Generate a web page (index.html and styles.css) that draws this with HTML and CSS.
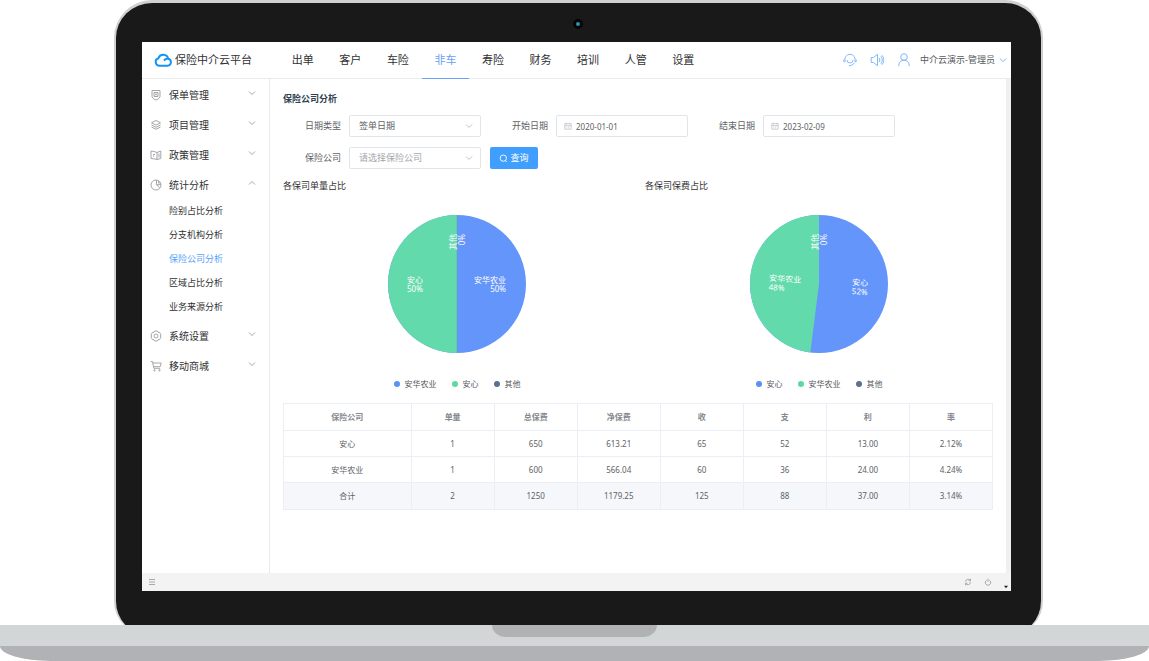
FILE: index.html
```html
<!DOCTYPE html>
<html lang="zh-CN">
<head>
<meta charset="utf-8">
<title>保险中介云平台</title>
<link rel="stylesheet" href="styles.css">
</head>
<body>
<svg class="defs" aria-hidden="true">
  <symbol id="down" viewBox="0 0 8 8"><path d="M1 2.5l3 3 3-3"/></symbol>
  <symbol id="up" viewBox="0 0 8 8"><path d="M1 5.5l3-3 3 3"/></symbol>
  <symbol id="calendar" viewBox="0 0 10 10"><path d="M1 2h8v7H1zM1 4.3h8M3 .8v2M7 .8v2M3 6h1M5 6h1M7 6h.8M3 7.5h1M5 7.5h1"/></symbol>
</svg>
<div class="lid">
  <span class="camera"></span>
  <div class="screen">
    <header class="topbar">
      <a class="brand" href="#">
        <svg class="brand-icon" viewBox="0 0 18 14"><path d="M5 12.7h8.6a3.5 3.5 0 0 0 .6-6.9A5.1 5.1 0 0 0 4.4 5.3 3.8 3.8 0 0 0 5 12.7zM10 7.6a4.2 4.2 0 0 1 4.2-1.8"/></svg>
        <span>保险中介云平台</span>
      </a>
      <nav class="nav">
        <a href="#">出单</a><a href="#">客户</a><a href="#">车险</a><a href="#" class="active">非车</a><a href="#">寿险</a><a href="#">财务</a><a href="#">培训</a><a href="#">人管</a><a href="#">设置</a>
      </nav>
      <div class="tools">
        <button type="button" aria-label="客服"><svg viewBox="0 0 14 14"><path d="M2.200 8.500A5.200 5.200 0 1 1 11.800 8.500M.8 6.500v2.200h1.400M13.200 6.500v2.200h-1.400M4 7a3 3 0 0 0 6 0M11.500 9.700a5.500 5.500 0 0 1-3.300 2.600M5.800 12.600h2.400"/></svg></button>
        <button type="button" aria-label="消息"><svg viewBox="0 0 14 14"><path d="M1.200 4.500h2.300L7.500 1.200v11.600l-4-3.300H1.200zM9.200 5a3.300 3.300 0 0 1 0 4M10.800 3.200a5.600 5.600 0 0 1 0 7.600M12 2.200a7 7 0 0 1 0 9.600"/></svg></button>
        <button type="button" class="user"><svg viewBox="0 0 14 14"><circle cx="7" cy="4" r="3.300"/><path d="M1.800 13.200V12a5.200 4.800 0 0 1 10.400 0V13.200"/></svg><span>中介云演示-管理员</span><svg class="chev" viewBox="0 0 8 8"><path d="M.8 2.500L4 5.600l3.200-3.100"/></svg></button>
      </div>
    </header>
    <div class="body">
      <aside class="sidebar">
        <button type="button" class="menu"><svg viewBox="0 0 12 12"><path d="M2 1.500h8v6.200L8.500 9.800 6 11 3.500 9.800 2 7.700zM4 3.500h4v4H4zM5 4.500l2 2M7 4.500l-2 2"/></svg><span>保单管理</span><svg class="chev"><use href="#down"/></svg></button>
        <button type="button" class="menu"><svg viewBox="0 0 12 12"><path d="M6 1.500l4.500 2.300L6 6.100 1.500 3.800zM1.500 6L6 8.300 10.500 6M1.500 8L6 10.300 10.500 8"/></svg><span>项目管理</span><svg class="chev"><use href="#down"/></svg></button>
        <button type="button" class="menu"><svg viewBox="0 0 12 12"><path d="M1 2l3 .5 3 1 3.800-1.500v7.500L7 10.500 4 9.800 1 9.500zM7 3.500v7M3 5.500h2M3 7h1M9 4.500v4"/></svg><span>政策管理</span><svg class="chev"><use href="#down"/></svg></button>
        <button type="button" class="menu"><svg viewBox="0 0 12 12"><circle cx="6" cy="6" r="5"/><path d="M6.500 1v4.700H11M6.500 5.700l3 3M8.500 2v2h2"/></svg><span>统计分析</span><svg class="chev"><use href="#up"/></svg></button>
        <div class="submenu">
          <a href="#">险别占比分析</a>
          <a href="#">分支机构分析</a>
          <a href="#" class="active">保险公司分析</a>
          <a href="#">区域占比分析</a>
          <a href="#">业务来源分析</a>
        </div>
        <button type="button" class="menu"><svg viewBox="0 0 12 12"><path d="M4.700 1h2.600l.8 1.300 1.500.1 1.300 2.200L10.300 6l.6 1.400-1.300 2.200-1.500.1L7.300 11H4.700l-.8-1.300-1.500-.1L1.100 7.400 1.700 6l-.6-1.400 1.300-2.200 1.500-.1z"/><circle cx="6" cy="6" r="2"/></svg><span>系统设置</span><svg class="chev"><use href="#down"/></svg></button>
        <button type="button" class="menu"><svg viewBox="0 0 12 12"><path d="M.5 1.500h2l1.300 6.800h6.400M2.800 3h8.400l-1 3.700H3.500"/><circle cx="4.500" cy="10.300" r=".7"/><circle cx="9.500" cy="10.300" r=".7"/></svg><span>移动商城</span><svg class="chev"><use href="#down"/></svg></button>
      </aside>
      <main class="main">
        <h1>保险公司分析</h1>
        <form class="filters">
          <div class="field"><label for="type">日期类型</label><div class="control"><select id="type"><option>签单日期</option></select><svg class="chev"><use href="#down"/></svg></div></div>
          <div class="field"><label for="start">开始日期</label><div class="control"><svg class="cal"><use href="#calendar"/></svg><input id="start" type="text" value="2020-01-01"></div></div>
          <div class="field"><label for="end">结束日期</label><div class="control"><svg class="cal"><use href="#calendar"/></svg><input id="end" type="text" value="2023-02-09"></div></div>
          <div class="field"><label for="company">保险公司</label><div class="control"><select id="company" class="empty"><option>请选择保险公司</option></select><svg class="chev"><use href="#down"/></svg></div></div>
          <button type="button" class="search"><svg viewBox="0 0 10 10"><circle cx="4.800" cy="4.600" r="3.500"/><path d="M7 7.300l1.700 1.700"/></svg>查询</button>
        </form>
        <div class="charts">
          <section>
            <h2>各保司单量占比</h2>
            <svg class="pie" viewBox="0 0 140 140">
              <circle cx="70" cy="70" r="69" fill="#6395fa"/>
              <path d="M70 70V139A69 69 0 0 1 70 1z" fill="#63daab"/>
              <path d="M70 1v138" stroke="#62a3a9" stroke-width=".5"/>
              <text x="20" y="69">安心</text><text x="20" y="78">50%</text>
              <text x="119" y="69" text-anchor="end">安华农业</text><text x="119" y="78" text-anchor="end">50%</text>
              <g transform="rotate(-90 70 20)"><text x="70" y="19" text-anchor="end">其他</text><text x="70" y="28" text-anchor="end">0%</text></g>
            </svg>
            <ul class="legend"><li class="blue">安华农业</li><li class="green">安心</li><li class="navy">其他</li></ul>
          </section>
          <section>
            <h2>各保司保费占比</h2>
            <svg class="pie" viewBox="0 0 140 140">
              <circle cx="70" cy="70" r="69" fill="#6395fa"/>
              <path d="M70 70L61.350 138.460A69 69 0 0 1 70 1z" fill="#63daab"/>
              <g transform="rotate(3.600 70 70)"><text x="20" y="70">安华农业</text><text x="20" y="79">48%</text><text x="119" y="69" text-anchor="end">安心</text><text x="119" y="78" text-anchor="end">52%</text></g>
              <g transform="rotate(-90 70 20)"><text x="70" y="19" text-anchor="end">其他</text><text x="70" y="28" text-anchor="end">0%</text></g>
            </svg>
            <ul class="legend"><li class="blue">安心</li><li class="green">安华农业</li><li class="navy">其他</li></ul>
          </section>
        </div>
        <table>
          <thead><tr><th class="name">保险公司</th><th>单量</th><th>总保费</th><th>净保费</th><th>收</th><th>支</th><th>利</th><th>率</th></tr></thead>
          <tbody>
            <tr><td>安心</td><td>1</td><td>650</td><td>613.21</td><td>65</td><td>52</td><td>13.00</td><td>2.12%</td></tr>
            <tr><td>安华农业</td><td>1</td><td>600</td><td>566.04</td><td>60</td><td>36</td><td>24.00</td><td>4.24%</td></tr>
          </tbody>
          <tfoot><tr><td>合计</td><td>2</td><td>1250</td><td>1179.25</td><td>125</td><td>88</td><td>37.00</td><td>3.14%</td></tr></tfoot>
        </table>
      </main>
      <div class="track"></div>
    </div>
    <footer class="status">
      <button type="button" aria-label="菜单"><svg viewBox="0 0 8 8"><path d="M1 1.500h6M1 4h6M1 6.500h6"/></svg></button>
      <span class="spacer"></span>
      <button type="button" aria-label="刷新"><svg viewBox="0 0 8 8"><path d="M1.500 3.700A2.600 2.600 0 0 1 6.300 2.500M6.500 .8v2h-2M6.500 4.300A2.600 2.600 0 0 1 1.700 5.500M1.500 7.200v-2h2"/></svg></button>
      <button type="button" aria-label="退出"><svg viewBox="0 0 8 8"><path d="M2.600 2.200a2.700 2.700 0 1 0 2.800 0M4 .8v3"/></svg></button>
      <svg class="tip" viewBox="0 0 6 6"><path d="M0 1h6L3 5z"/></svg>
    </footer>
  </div>
</div>
<div class="base"><span class="notch"></span></div>
</body>
</html>
```
FILE: styles.css
```css
* { box-sizing: border-box; }
body {
  margin: 0;
  min-height: 100vh;
  display: flex;
  flex-direction: column;
  background: #fff;
  color: #303133;
  font: 9px/12px "Noto Sans", "Noto Sans CJK SC", sans-serif;
}
a { color: inherit; text-decoration: none; }
button { padding: 0; border: 0; background: none; color: inherit; font: inherit; cursor: pointer; }
svg { display: block; fill: none; stroke: currentColor; }
h1, h2, ul { margin: 0; padding: 0; }
.defs { position: absolute; width: 0; height: 0; }

/* Laptop */
.lid {
  position: relative;
  flex: 1;
  display: flex;
  margin: 0 106px -10px 114px;
  padding: 39px 30px 44px 26px;
  border: 2px solid #cfd0d2;
  border-top-width: 3px;
  border-bottom-width: 0;
  border-radius: 38px 38px 34px 34px;
  background: #191919;
}
.camera {
  position: absolute;
  top: 16px;
  left: calc(50% - 6px);
  width: 10px;
  height: 10px;
  border: 3px solid #050505;
  border-radius: 50%;
  background: #2f8fb0;
}
.base {
  position: relative;
  height: 36px;
  border-radius: 0 0 50px 50px / 0 0 15px 15px;
  background: linear-gradient(#d2d6d7 21px, #b1b2b5 21px);
}
.notch {
  position: absolute;
  top: 0;
  left: calc(50% - 83px);
  width: 165px;
  height: 12px;
  border-radius: 0 0 14px 14px / 0 0 12px 12px;
  background: #b1b2b4;
}
.screen { flex: 1; min-width: 0; display: flex; flex-direction: column; background: #fff; }

/* Header */
.topbar {
  display: flex;
  height: 37px;
  padding: 0 4px 0 12px;
  border-bottom: 1px solid #e8eaec;
}
.brand { width: 125px; display: flex; align-items: center; gap: 3px; font-size: 11px; }
.brand-icon { width: 18px; height: 14px; color: #1495f5; stroke-width: 2; }
.nav { width: 428px; display: grid; grid-template-columns: repeat(9, 1fr); font-size: 11px; line-height: 36px; text-align: center; }
.nav a { height: 37px; }
.nav .active { color: #6ba1f8; border-bottom: 1px solid #6ba1f8; }
.tools { margin-left: auto; display: flex; align-items: center; gap: 13px; color: #82b9f8; }
.tools svg { width: 14px; height: 14px; }
.user { display: flex; align-items: center; gap: 9px; }
.user span { color: #55585e; }
.user .chev { width: 8px; height: 8px; margin-left: -5px; }

/* Sidebar */
.body { flex: 1; display: flex; }
.sidebar { width: 128px; padding: 2px 13px 0 8px; border-right: 1px solid #e8eaec; }
.menu {
  width: 100%;
  height: 28px;
  margin-bottom: 2px;
  display: flex;
  align-items: center;
  gap: 7px;
  font-size: 10px;
  text-align: left;
}
.menu svg { width: 12px; height: 12px; color: #a3a6ab; stroke-width: 1; }
.menu .chev { width: 8px; height: 8px; margin: 0 0 4px auto; }
.submenu { margin: -2px 0 3px 19px; display: flex; flex-direction: column; line-height: 24px; }
.submenu .active { color: #56a2fb; }
.track { width: 5px; background: #f0f0f0; }

/* Filters */
.main { flex: 1; min-width: 0; padding: 14px 13px 0; }
h1 { color: #303f50; font-size: 9px; font-weight: 700; line-height: 12px; }
.filters { display: grid; grid-template-columns: repeat(3, 198px); gap: 10px 9px; margin-top: 10px; }
.field { display: flex; align-items: center; }
.field label { width: 66px; padding-right: 8px; color: #606266; text-align: right; }
.control {
  flex: 1;
  min-width: 0;
  height: 22px;
  display: flex;
  align-items: center;
  padding: 0 7px;
  border: 1px solid #e1e4e9;
  border-radius: 2px;
  color: #c0c4cc;
}
.control .chev { width: 8px; height: 8px; pointer-events: none; }
.control .cal { width: 8px; height: 8px; }
.control select, .control input {
  flex: 1;
  min-width: 0;
  height: 18px;
  padding: 0 2px;
  border: 0;
  outline: 0;
  background: none;
  appearance: none;
  color: #606266;
  font: inherit;
}
.control input { padding: 0 4px; font-size: 8px; }
.control .empty { color: #a2a5ab; }
.search {
  width: 48px;
  height: 22px;
  display: flex;
  align-items: center;
  justify-content: center;
  gap: 2px;
  border-radius: 2px;
  background: #409eff;
  color: #fff;
}
.search svg { width: 9px; height: 9px; }

/* Charts */
.charts { display: grid; grid-template-columns: 1fr 1fr; gap: 14px; margin-top: 10px; }
h2 { font-size: 9px; font-weight: 400; line-height: 14px; }
.pie { width: 140px; height: 140px; margin: 21px auto 24px; stroke: none; }
.pie text { fill: #fff; font-size: 8px; }
.legend { display: flex; justify-content: center; gap: 15px; color: #55585e; font-size: 8px; list-style: none; }
.legend li { display: flex; align-items: center; gap: 5px; }
.legend li::before { content: ""; width: 6px; height: 6px; border-radius: 50%; background: currentColor; }
.legend .blue::before { background: #5b8ff9; }
.legend .green::before { background: #5ad8a6; }
.legend .navy::before { background: #5d7092; }

/* Table */
table { width: 100%; margin-top: 13px; border-collapse: collapse; table-layout: fixed; color: #606266; font-size: 8px; text-align: center; }
th, td { height: 26px; padding: 0; border: 1px solid #ebeef5; }
thead th, tfoot td { height: 27px; }
th { color: #85888e; font-weight: 700; }
.name { width: 18%; }
tfoot { background: #f5f7fa; }

/* Status bar */
.status { height: 18px; display: flex; align-items: center; gap: 12px; padding: 0 3px 0 6px; background: #f3f3f3; color: #a5a7aa; }
.status svg { width: 8px; height: 8px; }
.spacer { flex: 1; }
.status .tip { width: 4px; height: 4px; align-self: flex-end; margin-bottom: 2px; fill: #222; stroke: none; }
```
